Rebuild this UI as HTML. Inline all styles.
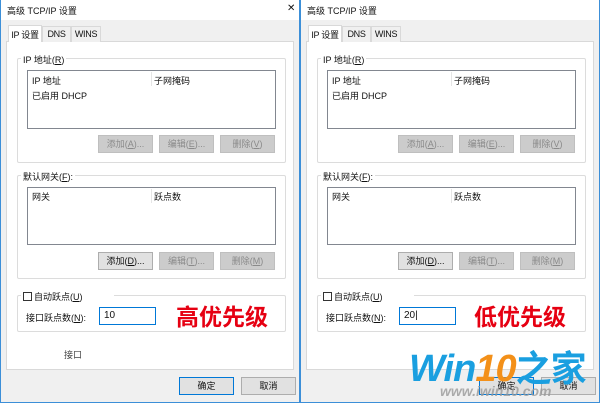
<!DOCTYPE html>
<html><head><meta charset="utf-8"><style>
*{margin:0;padding:0;box-sizing:border-box}
body{width:600px;height:403px;overflow:hidden;background:#fff;font-family:"Liberation Sans","Noto Sans CJK SC",sans-serif;font-size:9px;color:#111;position:relative}
.win{position:absolute;top:0;width:300px;height:403px;background:#f0f0f0;border:1px solid #3c8fd8;border-top:none}
.a{position:absolute;white-space:nowrap}
.title{position:absolute;left:0;top:0;width:100%;height:20px;background:#fff}
.tab{position:absolute;top:26px;height:16px;border:1px solid #d9d9d9;border-bottom:none;background:#f0f0f0;padding-top:2px;text-align:center;font-size:9px;letter-spacing:-0.3px}
.panel{position:absolute;left:5px;top:41px;width:288px;height:329px;background:#fff;border:1px solid #d9d9d9}
.grp{position:absolute;border:1px solid #dcdcdc;border-radius:2px}
.list{position:absolute;border:1px solid #828790;background:#fff}
.btn{position:absolute;height:18px;width:55px;background:#cccccc;border:1px solid #bfbfbf;color:#8a8a8a;text-align:center;line-height:16px;font-size:9px}
.btn.en{background:#e1e1e1;border-color:#adadad;color:#111}
.btn.def{border:1px solid #0078d7;background:#e1e1e1;color:#111}
.inp{position:absolute;border:1px solid #0078d7;background:#fff;height:18px;width:57px;padding:2px 4px;font-size:10px}
.red{position:absolute;color:#e60012;font-weight:bold;font-size:23px;letter-spacing:0px}
</style></head><body>

<!-- LEFT -->
<div class="win" style="left:0;border-left:1px solid #3c8fd8">
 <div class="title"></div>
 <div class="a" style="left:6px;top:4px;font-size:9px">高级 TCP/IP 设置</div>
 <div class="a" style="left:286px;top:3px;font-size:10px">✕</div>
 <div class="panel"></div>
 <div class="tab" style="left:7px;top:25px;width:34px;height:17px;background:#fff;z-index:2">IP 设置</div>
 <div class="tab" style="left:41px;width:29px">DNS</div>
 <div class="tab" style="left:70px;width:30px">WINS</div>
 <div class="grp" style="left:16px;top:58px;width:269px;height:105px"></div>
 <div class="a" style="left:20px;top:53px;background:#fff;padding:0 2px">IP 地址(<u>R</u>)</div>
 <div class="list" style="left:26px;top:70px;width:249px;height:59px"></div>
 <div class="a" style="left:150px;top:72px;width:1px;height:14px;background:#e5e5e5"></div>
 <div class="a" style="left:31px;top:74px">IP 地址</div>
 <div class="a" style="left:153px;top:74px">子网掩码</div>
 <div class="a" style="left:31px;top:89px">已启用 DHCP</div>
 <div class="btn" style="left:97px;top:135px">添加(<u>A</u>)...</div>
 <div class="btn" style="left:158px;top:135px">编辑(<u>E</u>)...</div>
 <div class="btn" style="left:219px;top:135px">删除(<u>V</u>)</div>
 <div class="grp" style="left:16px;top:175px;width:269px;height:104px"></div>
 <div class="a" style="left:20px;top:170px;background:#fff;padding:0 2px">默认网关(<u>F</u>):</div>
 <div class="list" style="left:26px;top:187px;width:249px;height:58px"></div>
 <div class="a" style="left:150px;top:189px;width:1px;height:14px;background:#e5e5e5"></div>
 <div class="a" style="left:31px;top:190px">网关</div>
 <div class="a" style="left:153px;top:190px">跃点数</div>
 <div class="btn en" style="left:97px;top:252px">添加(<u>D</u>)...</div>
 <div class="btn" style="left:158px;top:252px">编辑(<u>T</u>)...</div>
 <div class="btn" style="left:219px;top:252px">删除(<u>M</u>)</div>
 <div class="grp" style="left:16px;top:295px;width:269px;height:37px"></div>
 <div class="a" style="left:20px;top:289px;background:#fff;width:93px;height:12px"></div>
 <div class="a" style="left:22px;top:292px;width:9px;height:9px;border:1px solid #333;background:#fff"></div>
 <div class="a" style="left:33px;top:290px">自动跃点(<u>U</u>)</div>
 <div class="a" style="left:25px;top:311px">接口跃点数(<u>N</u>):</div>
 <div class="inp" style="left:98px;top:307px">10</div>
 <div class="red" style="left:175px;top:298px">高优先级</div>
 <div class="a" style="left:63px;top:348px;color:#444">接口</div>
 <div class="btn def" style="left:178px;top:377px">确定</div>
 <div class="btn en" style="left:240px;top:377px">取消</div>
</div>

<!-- RIGHT -->
<div class="win" style="left:300px;border-left:1px solid #3c8fd8">
 <div class="title"></div>
 <div class="a" style="left:6px;top:4px;font-size:9px">高级 TCP/IP 设置</div>
 <div class="panel"></div>
 <div class="tab" style="left:7px;top:25px;width:34px;height:17px;background:#fff;z-index:2">IP 设置</div>
 <div class="tab" style="left:41px;width:29px">DNS</div>
 <div class="tab" style="left:70px;width:30px">WINS</div>
 <div class="grp" style="left:16px;top:58px;width:269px;height:105px"></div>
 <div class="a" style="left:20px;top:53px;background:#fff;padding:0 2px">IP 地址(<u>R</u>)</div>
 <div class="list" style="left:26px;top:70px;width:249px;height:59px"></div>
 <div class="a" style="left:150px;top:72px;width:1px;height:14px;background:#e5e5e5"></div>
 <div class="a" style="left:31px;top:74px">IP 地址</div>
 <div class="a" style="left:153px;top:74px">子网掩码</div>
 <div class="a" style="left:31px;top:89px">已启用 DHCP</div>
 <div class="btn" style="left:97px;top:135px">添加(<u>A</u>)...</div>
 <div class="btn" style="left:158px;top:135px">编辑(<u>E</u>)...</div>
 <div class="btn" style="left:219px;top:135px">删除(<u>V</u>)</div>
 <div class="grp" style="left:16px;top:175px;width:269px;height:104px"></div>
 <div class="a" style="left:20px;top:170px;background:#fff;padding:0 2px">默认网关(<u>F</u>):</div>
 <div class="list" style="left:26px;top:187px;width:249px;height:58px"></div>
 <div class="a" style="left:150px;top:189px;width:1px;height:14px;background:#e5e5e5"></div>
 <div class="a" style="left:31px;top:190px">网关</div>
 <div class="a" style="left:153px;top:190px">跃点数</div>
 <div class="btn en" style="left:97px;top:252px">添加(<u>D</u>)...</div>
 <div class="btn" style="left:158px;top:252px">编辑(<u>T</u>)...</div>
 <div class="btn" style="left:219px;top:252px">删除(<u>M</u>)</div>
 <div class="grp" style="left:16px;top:295px;width:269px;height:37px"></div>
 <div class="a" style="left:20px;top:289px;background:#fff;width:93px;height:12px"></div>
 <div class="a" style="left:22px;top:292px;width:9px;height:9px;border:1px solid #333;background:#fff"></div>
 <div class="a" style="left:33px;top:290px">自动跃点(<u>U</u>)</div>
 <div class="a" style="left:25px;top:311px">接口跃点数(<u>N</u>):</div>
 <div class="inp" style="left:98px;top:307px">20|</div>
 <div class="red" style="left:173px;top:298px">低优先级</div>
 <div class="btn def" style="left:178px;top:377px">确定</div>
 <div class="btn en" style="left:240px;top:377px">取消</div>
</div>

<div class="a" style="left:409px;top:340px;font-size:38px;font-weight:bold;font-style:italic;color:#1a9fe0;letter-spacing:-1px">Win<span style="color:#f39019">10</span><span style="font-style:normal;font-family:'Noto Sans CJK SC',sans-serif;font-size:36px">之家</span></div>
<div class="a" style="left:440px;top:383px;font-size:14px;font-style:italic;color:#9a9a9a;font-weight:bold;opacity:.8">www.iwin10.com</div>
</body></html>
